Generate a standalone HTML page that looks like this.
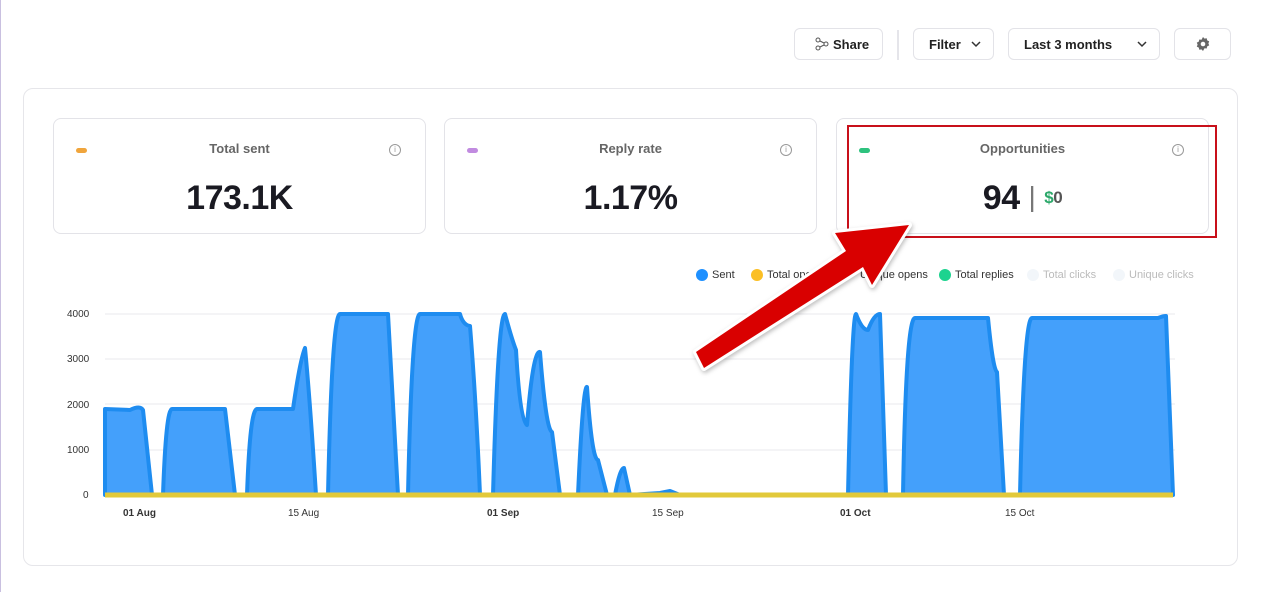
<!DOCTYPE html>
<html><head><meta charset="utf-8"><style>
body{margin:0;width:1280px;height:592px;background:#fff;font-family:"Liberation Sans",sans-serif;position:relative;overflow:hidden;color:#1d1d22}
.btn{position:absolute;top:28px;height:32px;border:1px solid #e3e3e8;border-radius:6px;box-sizing:border-box;font-size:13px;font-weight:bold;display:flex;align-items:center;color:#222}
.panel{position:absolute;left:23px;top:88px;width:1215px;height:478px;border:1px solid #e6e6ea;border-radius:10px;box-sizing:border-box}
.card{position:absolute;top:118px;width:373px;height:116px;border:1px solid #e3e3e8;border-radius:8px;box-sizing:border-box}
.card .t{position:absolute;top:22px;left:0;right:0;text-align:center;font-size:13px;color:#666;font-weight:bold}
.card .v{position:absolute;top:60px;left:0;right:0;text-align:center;font-size:34px;font-weight:bold;color:#1a1a22;letter-spacing:-0.5px}
.dash{position:absolute;left:22px;top:29px;width:11px;height:5px;border-radius:3px}
.info{position:absolute;right:24px;top:25px;width:10px;height:10px;border:1px solid #999;border-radius:50%;font-size:8px;color:#999;text-align:center;line-height:10px}
.lg{position:absolute;top:269px;font-size:11px;color:#333;display:flex;align-items:center}
.lg i{display:inline-block;width:12px;height:12px;border-radius:50%;margin-right:4px}
.ax{position:absolute;font-size:10px;color:#333}
</style></head><body>
<div style="position:absolute;left:0;top:0;width:1px;height:592px;background:#c9c0e0"></div>
<div class="btn" style="left:794px;width:89px;padding-left:20px"><svg width="14" height="14" viewBox="0 0 14 14" style="margin-right:4px" fill="none" stroke="#555" stroke-width="1"><circle cx="3" cy="3" r="2"/><circle cx="3" cy="11" r="2"/><circle cx="11" cy="7" r="2"/><path d="M5 4l4 2M5 10l4-2"/></svg>Share</div>
<div style="position:absolute;left:897px;top:30px;width:2px;height:30px;background:#e5e5ea"></div>
<div class="btn" style="left:913px;width:81px;padding-left:15px">Filter<svg style="margin-left:10px" width="10" height="7" viewBox="0 0 10 7"><path d="M1 1l4 4 4-4" fill="none" stroke="#333" stroke-width="1.5"/></svg></div>
<div class="btn" style="left:1008px;width:152px;padding-left:15px">Last 3 months<svg style="position:absolute;right:12px;top:12px" width="10" height="7" viewBox="0 0 10 7"><path d="M1 1l4 4 4-4" fill="none" stroke="#333" stroke-width="1.5"/></svg></div>
<div class="btn" style="left:1174px;width:57px;justify-content:center"><svg width="16" height="16" viewBox="0 0 16 16"><path fill="#666" d="M8 1l1.5 1.6 2.2-.3.5 2.1 2 1-.8 2 .8 2-2 1-.5 2.1-2.2-.3L8 15l-1.5-1.6-2.2.3-.5-2.1-2-1 .8-2-.8-2 2-1 .5-2.1 2.2.3z"/><circle cx="8" cy="8" r="2.3" fill="#fff"/></svg></div>
<div class="panel"></div>
<div class="card" style="left:53px"><div class="dash" style="background:#f0a53c"></div><div class="t">Total sent</div><div class="info">i</div><div class="v">173.1K</div></div>
<div class="card" style="left:444px"><div class="dash" style="background:#c18be0"></div><div class="t">Reply rate</div><div class="info">i</div><div class="v">1.17%</div></div>
<div class="card" style="left:836px"><div class="dash" style="background:#2ec27e"></div><div class="t">Opportunities</div><div class="info">i</div><div class="v">94 <span style="color:#777;font-weight:normal;font-size:28px;position:relative;top:-3px">|</span> <span style="font-size:17px;color:#2ca86a;position:relative;top:-6px">$<span style="color:#555">0</span></span></div></div>
<div style="position:absolute;left:847px;top:125px;width:370px;height:113px;border:2px solid #c8101a;box-sizing:border-box"></div>
<div class="lg" style="left:696px"><i style="background:#1e90ff"></i>Sent</div>
<div class="lg" style="left:751px"><i style="background:#fbbf24"></i>Total opens</div>
<div class="lg" style="left:860px">Unique opens</div>
<div class="lg" style="left:939px"><i style="background:#1dd38f"></i>Total replies</div>
<div class="lg" style="left:1027px;color:#bbb"><i style="background:#f2f6fa"></i>Total clicks</div>
<div class="lg" style="left:1113px;color:#bbb"><i style="background:#f2f6fa"></i>Unique clicks</div>
<div class="ax" style="left:67px;top:309px">4000</div><div class="ax" style="left:67px;top:354px">3000</div><div class="ax" style="left:67px;top:400px">2000</div><div class="ax" style="left:67px;top:445px">1000</div><div class="ax" style="left:83px;top:490px">0</div>
<div class="ax" style="left:123px;top:508px;font-weight:bold">01 Aug</div><div class="ax" style="left:288px;top:508px">15 Aug</div><div class="ax" style="left:487px;top:508px;font-weight:bold">01 Sep</div><div class="ax" style="left:652px;top:508px">15 Sep</div><div class="ax" style="left:840px;top:508px;font-weight:bold">01 Oct</div><div class="ax" style="left:1005px;top:508px">15 Oct</div>
<svg style="position:absolute;left:0;top:0" width="1280" height="592">
<g stroke="#e8e8ec" stroke-width="1"><path d="M105 314H1175M105 359H1175M105 404H1175M105 450H1175"/></g>
<path fill="#44a0fb" stroke="#1e8cf0" stroke-width="4" stroke-linejoin="round" d="M105 495V409L130 410Q140 405 143 410L152 495L163 495Q166 409 172 409L225 409L235 495L247 495Q250 409 257 409L293 409Q300 360 305 348Q310 400 316 495L328 495Q332 314 340 314L388 314Q393 400 398 495L408 495Q412 314 420 314L460 314Q463 325 470 326Q476 400 480 495L493 495Q498 314 505 314Q512 340 516 350Q520 420 527 425Q533 350 540 352Q546 430 552 432L560 495L578 495Q583 385 587 387Q592 460 598 460L607 495L615 495Q620 468 624 468L630 495L660 493L670 491L680 495L848 495Q852 314 856 314Q862 330 868 330Q874 314 880 314L886 495L903 495Q906 318 915 318L988 318Q993 370 997 372L1004 495L1020 495Q1024 318 1032 318L1158 318Q1163 316 1166 316L1173 495Z"/>
<path d="M105 495H1173" stroke="#e2c93a" stroke-width="5"/>
<g stroke-linejoin="round" style="filter:drop-shadow(1px 2px 2px rgba(0,0,0,0.25))"><polygon points="696,352 846,251 835,233 909,225 872,285 863,267 704,368" fill="#d90000" stroke="#fff" stroke-width="6" paint-order="stroke"/></g>
</svg>
</body></html>
